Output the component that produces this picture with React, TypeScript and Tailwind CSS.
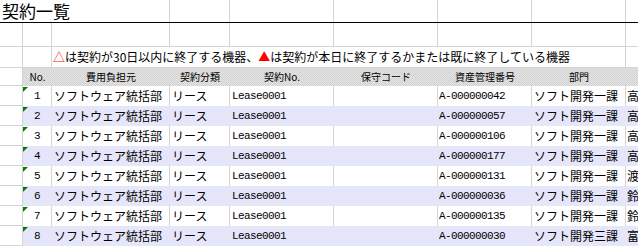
import React from 'react';

type Row = {
  no: string;
  payer: string;
  kind: string;
  contract: string;
  code: string;
  asset: string;
  section: string;
  user: string;
};

const rows: Row[] = [
  { no: '1', payer: 'ソフトウェア統括部', kind: 'リース', contract: 'Lease0001', code: '', asset: 'A-000000042', section: 'ソフト開発一課', user: '高' },
  { no: '2', payer: 'ソフトウェア統括部', kind: 'リース', contract: 'Lease0001', code: '', asset: 'A-000000057', section: 'ソフト開発一課', user: '高' },
  { no: '3', payer: 'ソフトウェア統括部', kind: 'リース', contract: 'Lease0001', code: '', asset: 'A-000000106', section: 'ソフト開発一課', user: '高' },
  { no: '4', payer: 'ソフトウェア統括部', kind: 'リース', contract: 'Lease0001', code: '', asset: 'A-000000177', section: 'ソフト開発一課', user: '高' },
  { no: '5', payer: 'ソフトウェア統括部', kind: 'リース', contract: 'Lease0001', code: '', asset: 'A-000000131', section: 'ソフト開発一課', user: '渡' },
  { no: '6', payer: 'ソフトウェア統括部', kind: 'リース', contract: 'Lease0001', code: '', asset: 'A-000000036', section: 'ソフト開発一課', user: '鈴' },
  { no: '7', payer: 'ソフトウェア統括部', kind: 'リース', contract: 'Lease0001', code: '', asset: 'A-000000135', section: 'ソフト開発一課', user: '鈴' },
  { no: '8', payer: 'ソフトウェア統括部', kind: 'リース', contract: 'Lease0001', code: '', asset: 'A-000000030', section: 'ソフト開発三課', user: '富' },
];

const headers = ['No.', '費用負担元', '契約分類', '契約No.', '保守コード', '資産管理番号', '部門'];

// column widths B..H (each includes its right gridline)
const widths = ['w-[29px]', 'w-[118px]', 'w-[60px]', 'w-[104px]', 'w-[104px]', 'w-[94px]', 'w-[94px]'];

const grid = 'border-[#d4d4d4]';
const mono = "font-['Liberation_Mono',monospace] text-[11px] tracking-[-0.6px]";

const BlankRow: React.FC<{ h: string }> = ({ h }) => (
  <div className={`flex ${h}`}>
    <div className={`w-[23px] shrink-0 border-r border-b ${grid}`} />
    {widths.map((w, i) => (
      <div key={i} className={`${w} shrink-0 border-r border-b ${grid}`} />
    ))}
    <div className={`flex-1 border-b ${grid}`} />
  </div>
);

export default function App() {
  return (
    <div className="w-[638px] h-[247px] overflow-hidden bg-white text-black font-['Noto_Sans_CJK_JP',sans-serif]">
      {/* Title row */}
      <div className="flex h-[23px] border-b border-black">
        <div className={`w-[170px] shrink-0 border-r ${grid} flex items-center pl-[2px] text-[17px] leading-[20px]`}>
          契約一覧
        </div>
        <div className={`w-[60px] shrink-0 border-r ${grid}`} />
        <div className={`w-[104px] shrink-0 border-r ${grid}`} />
        <div className={`w-[104px] shrink-0 border-r ${grid}`} />
        <div className={`w-[94px] shrink-0 border-r ${grid}`} />
        <div className={`w-[94px] shrink-0 border-r ${grid}`} />
        <div className="flex-1" />
      </div>

      <BlankRow h="h-[24px]" />

      {/* Legend row */}
      <div className="flex h-[21px]">
        <div className={`w-[23px] shrink-0 border-r border-b ${grid}`} />
        <div className={`w-[29px] shrink-0 border-r border-b ${grid}`} />
        <div className={`w-[574px] shrink-0 border-r border-b ${grid} flex items-center pl-[1px] text-[12px] leading-none whitespace-nowrap`}>
          <span className="text-[#ff0000]">△</span>
          <span>は契約が30日以内に終了する機器、</span>
          <span className="text-[#ff0000]">▲</span>
          <span>は契約が本日に終了するかまたは既に終了している機器</span>
        </div>
        <div className={`flex-1 border-b ${grid}`} />
      </div>

      {/* Header row */}
      <div className="flex h-[18px]">
        <div className={`w-[23px] shrink-0 border-r border-b ${grid}`} />
        <div className="flex flex-1 bg-[repeating-conic-gradient(#d3d3d3_0_25%,#e3e3e3_0_50%)] bg-[length:2px_2px]">
          {headers.map((h, i) => (
            <div key={h} className={`${widths[i]} shrink-0 flex items-center justify-center text-[10px] leading-none`}>
              {h}
            </div>
          ))}
          <div className="flex-1" />
        </div>
      </div>

      {/* Data rows */}
      {rows.map((r, idx) => {
        const odd = idx % 2 === 0;
        const line = odd ? grid : 'border-transparent';
        return (
          <div key={r.no} className={`flex h-[20px] ${odd ? 'bg-white' : 'bg-[#e6e6fa]'}`}>
            <div className={`w-[23px] shrink-0 bg-white border-r border-b ${grid}`} />
            <div className={`relative w-[29px] shrink-0 border-r ${line} flex items-center justify-center ${mono}`}>
              <span className="absolute left-0 top-[1px] w-0 h-0 border-t-[5px] border-r-[5px] border-t-[#008000] border-r-transparent" />
              {r.no}
            </div>
            <div className={`w-[118px] shrink-0 border-r ${line} flex items-center pl-[2px] text-[12px] leading-none whitespace-nowrap`}>
              {r.payer}
            </div>
            <div className={`w-[60px] shrink-0 border-r ${line} flex items-center pl-[2px] text-[12px] leading-none whitespace-nowrap`}>
              {r.kind}
            </div>
            <div className={`w-[104px] shrink-0 border-r ${line} flex items-center pl-[2px] ${mono}`}>
              {r.contract}
            </div>
            <div className={`w-[104px] shrink-0 border-r ${line} flex items-center pl-[2px] ${mono}`}>
              {r.code}
            </div>
            <div className={`w-[94px] shrink-0 border-r ${line} flex items-center pl-[1px] ${mono}`}>
              {r.asset}
            </div>
            <div className={`w-[94px] shrink-0 border-r ${line} flex items-center pl-[2px] text-[12px] leading-none whitespace-nowrap`}>
              {r.section}
            </div>
            <div className="flex-1 flex items-center pl-[1px] text-[12px] leading-none overflow-hidden whitespace-nowrap">
              {r.user}
            </div>
          </div>
        );
      })}
    </div>
  );
}
